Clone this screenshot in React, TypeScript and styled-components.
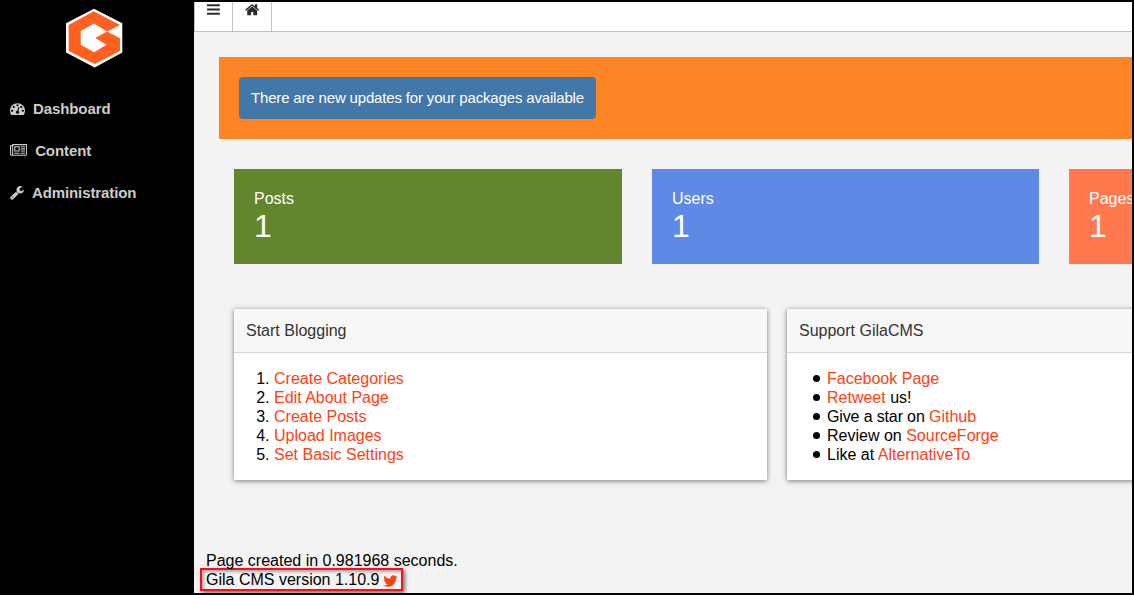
import React from 'react';
import styled, { createGlobalStyle } from 'styled-components';

const GlobalStyle = createGlobalStyle`
  *, *::before, *::after { box-sizing: border-box; }
  body {
    margin: 0;
    font: 16px/19px "Liberation Sans", Arial, sans-serif;
    color: #000;
    background: #000;
  }
`;

const Frame = styled.div`
  display: flex;
  width: 1134px;
  height: 595px;
  padding: 2px 2px 2px 0;
  background: #000;
  overflow: hidden;
`;

const Sidebar = styled.aside`
  flex: none;
  width: 194px;
  padding-top: 6px;
`;

const Logo = styled.svg`
  display: block;
  width: 60px;
  height: 60px;
  margin: 0 0 19px 64px;
`;

const NavItem = styled.a`
  display: flex;
  align-items: center;
  height: 42px;
  padding-left: 10px;
  gap: 8px;
  font-size: 15px;
  font-weight: bold;
  letter-spacing: -0.1px;
  color: #ccc;
`;

const Glyph = styled.svg<{ $w: number; $size: number }>`
  flex: none;
  width: ${(p) => (p.$w / 1792) * p.$size}px;
  height: ${(p) => p.$size}px;
  fill: currentColor;
`;

const Main = styled.main`
  flex: none;
  width: 938px;
  height: 591px;
  background: #f3f3f3;
  overflow: hidden;
`;

const Toolbar = styled.header`
  display: flex;
  height: 30px;
  background: #fff;
  border-bottom: 1px solid #c0c0c0;
  border-left: 1px solid #c0c0c0;
`;

const ToolButton = styled.a<{ $width: number }>`
  display: flex;
  justify-content: center;
  width: ${(p) => p.$width}px;
  height: 29px;
  border-right: 1px solid #c0c0c0;
  color: #2b2b2b;
`;

const Notice = styled.section`
  margin: 25px 0 0 25px;
  padding: 20px;
  background: #fe8526;
`;

const NoticeButton = styled.a`
  display: block;
  width: 357px;
  height: 42px;
  padding-left: 12px;
  border-radius: 4px;
  background: #4277aa;
  color: #fff;
  font-size: 15px;
  line-height: 42px;
  letter-spacing: -0.165px;
  white-space: nowrap;
`;

const Stats = styled.section`
  display: grid;
  grid-template-columns: 388px 387px 387px;
  gap: 30px;
  margin: 30px 0 0 40px;
`;

const Stat = styled.div<{ $color: string }>`
  height: 95px;
  padding: 20px;
  background: ${(p) => p.$color};
  color: #fff;
`;

const StatValue = styled.div`
  font-size: 32px;
  line-height: 36px;
`;

const Panels = styled.section`
  display: grid;
  grid-template-columns: repeat(2, 533px);
  gap: 20px;
  margin: 45px 0 0 40px;
`;

const Panel = styled.article`
  height: 171px;
  background: #fff;
  box-shadow: 0 1px 5px rgba(0, 0, 0, 0.5);
`;

const PanelTitle = styled.h4`
  height: 44px;
  margin: 0;
  padding-left: 12px;
  border-bottom: 1px solid #d5d5d5;
  background: #f7f7f7;
  color: #333;
  font-size: 16px;
  font-weight: normal;
  line-height: 43px;
`;

const NumberedList = styled.ol`
  margin: 0;
  padding: 16px 0 0 40px;
`;

const BulletList = styled.ul`
  margin: 0;
  padding: 16px 0 0 40px;
  list-style: none;

  li::before {
    content: '';
    display: inline-block;
    width: 7px;
    height: 7px;
    margin: 0 7px 0 -14px;
    border-radius: 50%;
    background: #000;
    vertical-align: 2px;
  }
`;

const Tight = styled.span`
  letter-spacing: -0.14px;
`;

const Link = styled.a`
  color: #ff4013;
`;

const BirdLink = styled.a`
  display: flex;
  padding-top: 2px;
  color: #ff4013;
`;

const Footer = styled.footer`
  margin: 71px 0 0 12px;
`;

const Version = styled.div`
  display: flex;
  align-items: center;
  gap: 4px;
  width: 203px;
  height: 23px;
  margin: -2px 0 0 -6px;
  padding-left: 4px;
  border: 2px solid #fc0d1b;
  box-shadow: 2px 2px 4px rgba(0, 0, 0, 0.55), inset 2px 2px 3px rgba(0, 0, 0, 0.3);
`;

type IconName = 'gauge' | 'news' | 'wrench' | 'bars' | 'home' | 'bird';

const ICONS: Record<IconName, { x: number; w: number; d: string }> = {
  gauge: {
    x: 0,
    w: 1792,
    d: 'M384 1152q0-53-37.5-90.5t-90.5-37.5-90.5 37.5-37.5 90.5 37.5 90.5 90.5 37.5 90.5-37.5 37.5-90.5zm192-448q0-53-37.5-90.5t-90.5-37.5-90.5 37.5-37.5 90.5 37.5 90.5 90.5 37.5 90.5-37.5 37.5-90.5zm428 481l101-382q6-26-7.5-48.5t-38.5-29.5-48 6.5-30 39.5l-101 382q-60 5-107 43.5t-63 98.5q-20 77 20 146t117 89 146-20 89-117q16-60-6-117t-72-91zm660-33q0-53-37.5-90.5t-90.5-37.5-90.5 37.5-37.5 90.5 37.5 90.5 90.5 37.5 90.5-37.5 37.5-90.5zm-640-640q0-53-37.5-90.5t-90.5-37.5-90.5 37.5-37.5 90.5 37.5 90.5 90.5 37.5 90.5-37.5 37.5-90.5zm448 192q0-53-37.5-90.5t-90.5-37.5-90.5 37.5-37.5 90.5 37.5 90.5 90.5 37.5 90.5-37.5 37.5-90.5zm320 448q0 261-141 483-19 29-54 29h-1402q-35 0-54-29-141-221-141-483 0-182 71-348t191-286 286-191 348-71 348 71 286 191 191 286 71 348z',
  },
  news: {
    x: 0,
    w: 2048,
    d: 'M1024 512h-384v384h384v-384zm128 640v128h-640v-128h640zm0-768v640h-640v-640h640zm640 768v128h-512v-128h512zm0-256v128h-512v-128h512zm0-256v128h-512v-128h512zm0-256v128h-512v-128h512zm-1536 960v-960h-128v960q0 26 19 45t45 19 45-19 19-45zm1664 0v-1088h-1536v1088q0 33-11 64h1483q26 0 45-19t19-45zm128-1216v1216q0 80-56 136t-136 56h-1664q-80 0-136-56t-56-136v-1088h256v-128h1792z',
  },
  wrench: {
    x: 64,
    w: 1664,
    d: 'M448 1472q0-26-19-45t-45-19-45 19-19 45 19 45 45 19 45-19 19-45zm644-420l-682 682q-37 37-90 37-52 0-91-37l-106-108q-38-36-38-90 0-53 38-91l681-681q39 98 114.5 173.5t173.5 114.5zm634-435q0 39-23 106-47 134-164.5 217.5t-258.5 83.5q-185 0-316.5-131.5t-131.5-316.5 131.5-316.5 316.5-131.5q58 0 121.5 16.5t107.5 46.5q16 11 16 28t-16 28l-293 169v224l193 107q5-3 79-48.5t135.5-81 70.5-35.5q15 0 23.5 10t8.5 25z',
  },
  bars: {
    x: 128,
    w: 1536,
    d: 'M1664 1344v128q0 26-19 45t-45 19h-1408q-26 0-45-19t-19-45v-128q0-26 19-45t45-19h1408q26 0 45 19t19 45zm0-512v128q0 26-19 45t-45 19h-1408q-26 0-45-19t-19-45v-128q0-26 19-45t45-19h1408q26 0 45 19t19 45zm0-512v128q0 26-19 45t-45 19h-1408q-26 0-45-19t-19-45v-128q0-26 19-45t45-19h1408q26 0 45 19t19 45z',
  },
  home: {
    x: 64,
    w: 1664,
    d: 'M1472 992v480q0 26-19 45t-45 19h-384v-384h-256v384h-384q-26 0-45-19t-19-45v-480q0-1 .5-3t.5-3l575-474 575 474q1 2 1 6zm223-69l-62 74q-8 9-21 11h-3q-13 0-21-7l-692-577-692 577q-12 8-24 7-13-2-21-11l-62-74q-8-10-7-23.5t11-21.5l719-599q32-26 76-26t76 26l244 204v-195q0-14 9-23t23-9h192q14 0 23 9t9 23v408l219 182q10 8 11 21.5t-7 23.5z',
  },
  bird: {
    x: 64,
    w: 1664,
    d: 'M1684 408q-67 98-162 167 1 14 1 42 0 130-38 259.5t-115.5 248.5-184.5 210.5-258 146-323 54.5q-271 0-496-145 35 4 78 4 225 0 401-138-105-2-188-64.5t-114-159.5q33 5 61 5 43 0 85-11-112-23-185.5-111.5t-73.5-205.5v-4q68 38 146 41-66-44-105-115t-39-154q0-88 44-163 121 149 294.5 238.5t371.5 99.5q-8-38-8-74 0-134 94.5-228.5t228.5-94.5q140 0 236 102 109-21 205-78-37 115-142 178 93-10 186-50z',
  },
};

function Icon({ name, size = 15 }: { name: IconName; size?: number }) {
  const { x, w, d } = ICONS[name];
  return (
    <Glyph $w={w} $size={size} viewBox={`${x} 0 ${w} 1792`} aria-hidden="true">
      <path d={d} />
    </Glyph>
  );
}

export default function App() {
  return (
    <>
      <GlobalStyle />
      <Frame>
        <Sidebar>
          <Logo viewBox="64 8 60 60">
            <path fill="#fff" d="M94 8.7 122.3 23.3V52.5L94.7 67.5 66 52.5V23.3Z" />
            <path fill="#ff5f1f" d="M93.7 11.3 120 25 107 31.6 93.8 23.6 80.7 31V44.7L94 52.3 106.5 44.7 95.3 38 107 31.6 120 38.3V51L94.7 64 68.7 51V25Z" />
          </Logo>
          <NavItem><Icon name="gauge" />Dashboard</NavItem>
          <NavItem><Icon name="news" />Content</NavItem>
          <NavItem><Icon name="wrench" />Administration</NavItem>
        </Sidebar>
        <Main>
          <Toolbar>
            <ToolButton $width={38}><Icon name="bars" /></ToolButton>
            <ToolButton $width={39}><Icon name="home" size={15.5} /></ToolButton>
          </Toolbar>
          <Notice>
            <NoticeButton>There are new updates for your packages available</NoticeButton>
          </Notice>
          <Stats>
            <Stat $color="#61862d">Posts<StatValue>1</StatValue></Stat>
            <Stat $color="#5e89e4">Users<StatValue>1</StatValue></Stat>
            <Stat $color="#ff784e">Pages<StatValue>1</StatValue></Stat>
          </Stats>
          <Panels>
            <Panel>
              <PanelTitle>Start Blogging</PanelTitle>
              <NumberedList>
                <li><Link>Create Categories</Link></li>
                <li><Link>Edit About Page</Link></li>
                <li><Link>Create Posts</Link></li>
                <li><Link>Upload Images</Link></li>
                <li><Link>Set Basic Settings</Link></li>
              </NumberedList>
            </Panel>
            <Panel>
              <PanelTitle>Support GilaCMS</PanelTitle>
              <BulletList>
                <li><Link>Facebook Page</Link></li>
                <li><Link>Retweet</Link> us!</li>
                <li><Tight>Give a star on </Tight><Link>Github</Link></li>
                <li>Review on <Link>SourceForge</Link></li>
                <li>Like at <Link>AlternativeTo</Link></li>
              </BulletList>
            </Panel>
          </Panels>
          <Footer>
            <div>Page created in 0.981968 seconds.</div>
            <Version>
              Gila CMS version 1.10.9
              <BirdLink><Icon name="bird" size={16} /></BirdLink>
            </Version>
          </Footer>
        </Main>
      </Frame>
    </>
  );
}
